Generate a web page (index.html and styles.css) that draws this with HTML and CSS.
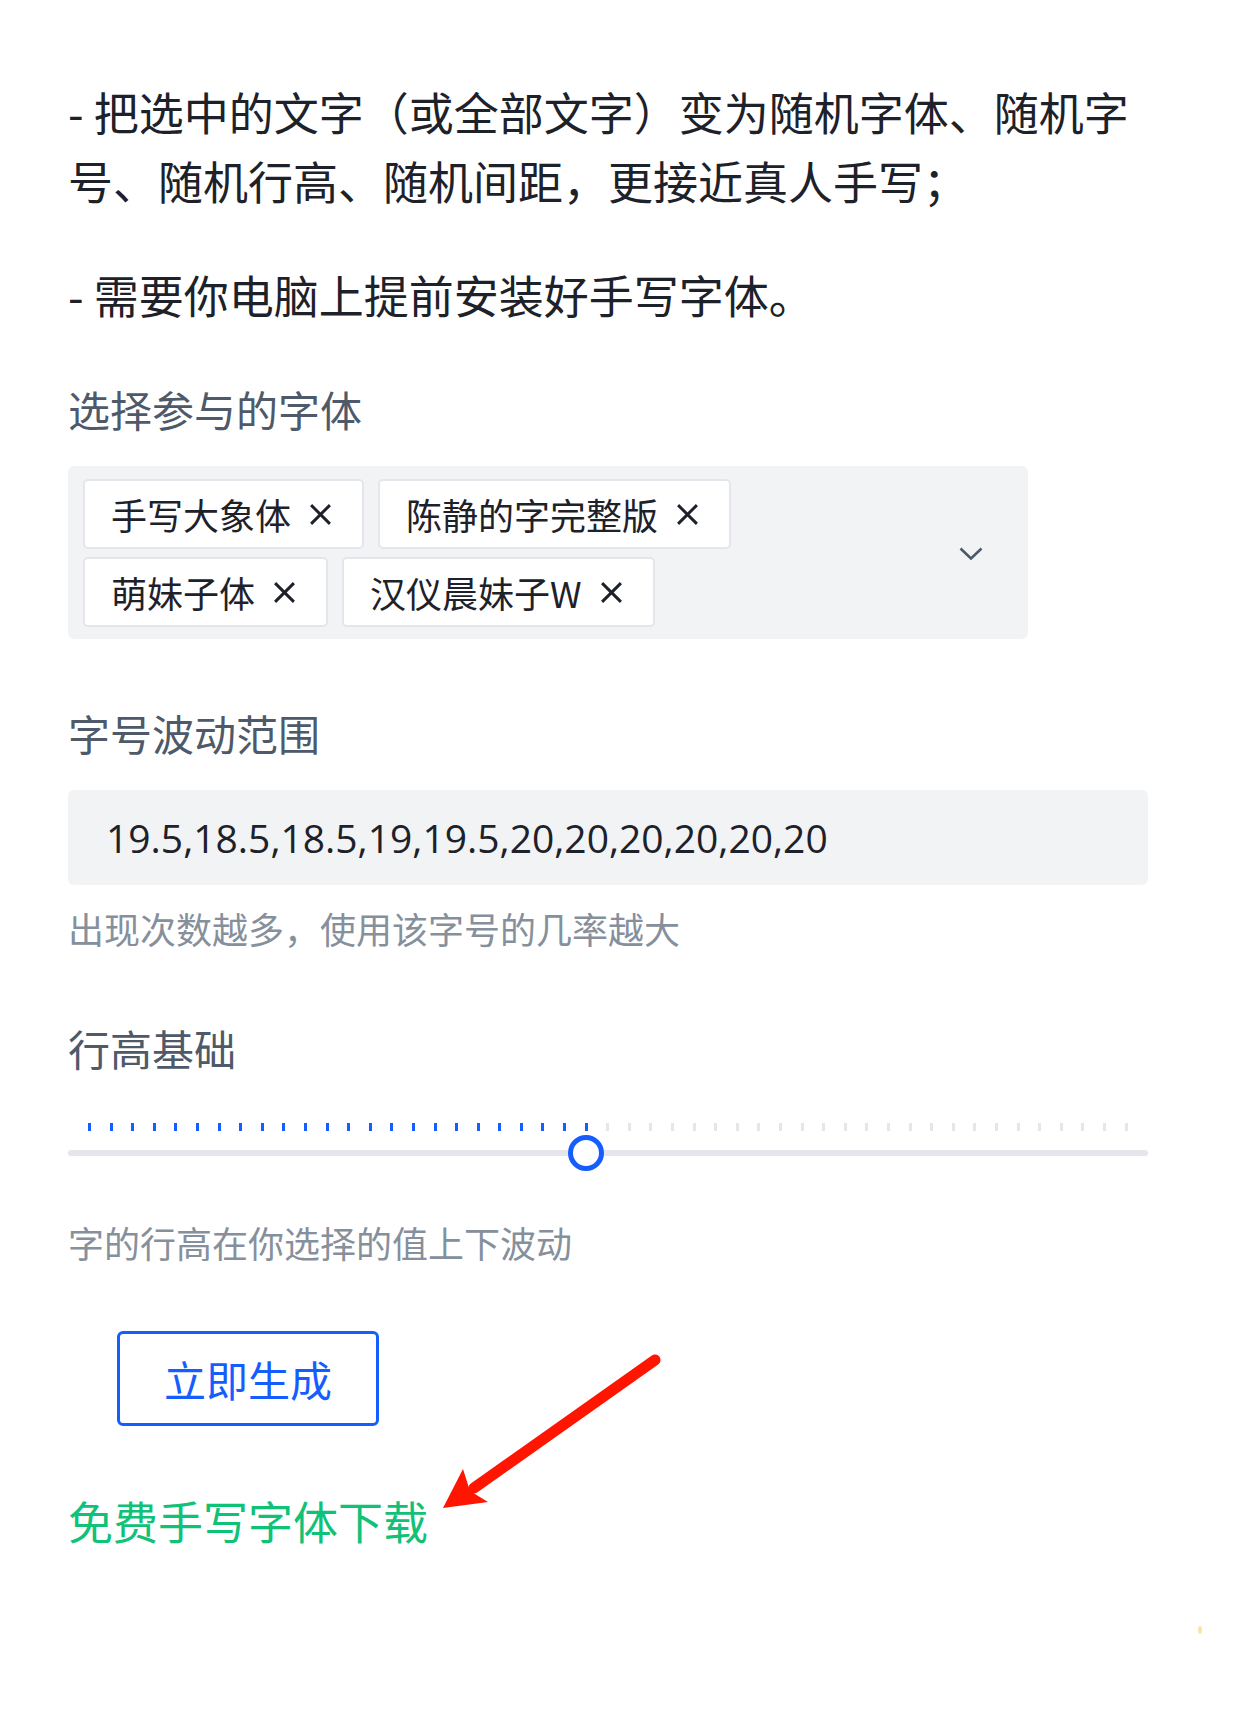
FILE: index.html
```html
<!DOCTYPE html>
<html lang="zh-CN">
<head>
    <meta charset="UTF-8">
    <meta name="viewport" content="width=device-width, initial-scale=1.0">
    <title>随机手写字体</title>
    <link rel="stylesheet" href="styles.css">
</head>
<body>
    <!-- 说明 -->
    <p class="desc">- 把选中的文字（或全部文字）变为随机字体、随机字号、随机行高、随机间距，更接近真人手写；</p>
    <p class="desc">- 需要你电脑上提前安装好手写字体。</p>

    <!-- 字体选择 -->
    <div class="label label-first">选择参与的字体</div>
    <div class="select">
        <div class="tags">
            <span class="tag">手写大象体<svg class="tag-close" viewBox="0 0 22 22"><path d="M2 2L20 20M20 2L2 20"/></svg></span>
            <span class="tag">陈静的字完整版<svg class="tag-close" viewBox="0 0 22 22"><path d="M2 2L20 20M20 2L2 20"/></svg></span>
            <span class="tag">萌妹子体<svg class="tag-close" viewBox="0 0 22 22"><path d="M2 2L20 20M20 2L2 20"/></svg></span>
            <span class="tag">汉仪晨妹子W<svg class="tag-close" viewBox="0 0 22 22"><path d="M2 2L20 20M20 2L2 20"/></svg></span>
        </div>
        <div class="select-arrow">
            <svg viewBox="0 0 24 13"><polyline points="1.5,1.5 12,11.5 22.5,1.5"/></svg>
        </div>
    </div>

    <!-- 字号 -->
    <div class="label">字号波动范围</div>
    <input class="text-input" type="text" value="19.5,18.5,18.5,19,19.5,20,20,20,20,20,20">
    <div class="help">出现次数越多，使用该字号的几率越大</div>

    <!-- 行高 -->
    <div class="label">行高基础</div>
    <div class="slider">
        <div class="ticks">
            <i class="on"></i><i class="on"></i><i class="on"></i><i class="on"></i><i class="on"></i><i class="on"></i>
            <i class="on"></i><i class="on"></i><i class="on"></i><i class="on"></i><i class="on"></i><i class="on"></i>
            <i class="on"></i><i class="on"></i><i class="on"></i><i class="on"></i><i class="on"></i><i class="on"></i>
            <i class="on"></i><i class="on"></i><i class="on"></i><i class="on"></i><i class="on"></i><i class="on"></i>
            <i></i><i></i><i></i><i></i><i></i><i></i><i></i><i></i><i></i><i></i><i></i><i></i><i></i>
            <i></i><i></i><i></i><i></i><i></i><i></i><i></i><i></i><i></i><i></i><i></i><i></i>
        </div>
        <div class="track"></div>
        <div class="thumb"></div>
    </div>
    <div class="help help-slider">字的行高在你选择的值上下波动</div>

    <button class="btn">立即生成</button>

    <a class="download" href="#">免费手写字体下载</a>

    <!-- 标注箭头 -->
    <svg class="arrow" viewBox="0 0 240 180">
        <line x1="225" y1="15" x2="44" y2="143"/>
        <polygon points="13,163 33,124 40,146 58,157"/>
    </svg>
    <span class="dot"></span>
</body>
</html>
```

FILE: styles.css
```css
* {
    margin: 0;
    padding: 0;
    box-sizing: border-box;
}

body {
    position: relative;
    width: 1247px;
    min-height: 1718px;
    padding: 77px 99px 0 68px;
    background: #fff;
    color: #1d2129;
    font-family: "Noto Sans CJK SC", sans-serif;
}

/* 说明 */
.desc {
    font-size: 45px;
    line-height: 69px;
    margin-bottom: 45px;
}

.desc + .desc {
    margin-bottom: 0;
}

/* Labels */
.label {
    font-size: 42px;
    line-height: 60px;
    color: #4e5969;
    margin-top: 64px;
}

.label-first {
    margin-top: 50px;
}

.help {
    font-size: 36px;
    line-height: 52px;
    color: #86909c;
    margin-top: 17px;
}

/* Select */
.select {
    display: flex;
    align-items: center;
    margin-top: 27px;
    padding: 13px 15px 12px 15px;
    background: #f2f3f5;
    border-radius: 6px;
    width: 960px;
}

.tags {
    flex: 1;
    display: flex;
    flex-wrap: wrap;
    gap: 8px 14px;
}

.tag {
    display: inline-flex;
    align-items: center;
    height: 70px;
    padding: 0 30px 0 26px;
    background: #fff;
    border: 2px solid #e5e6eb;
    border-radius: 5px;
    font-size: 36px;
    color: #1d2129;
}

.tag-close {
    width: 23px;
    height: 23px;
    margin-left: 18px;
    fill: none;
    stroke: #1d2129;
    stroke-width: 2.8;
}

.select-arrow {
    width: 84px;
    display: flex;
    justify-content: center;
}

.select-arrow svg {
    width: 24px;
    height: 13px;
    fill: none;
    stroke: #4e5969;
    stroke-width: 2.6;
}

/* Input */
.text-input {
    display: block;
    width: 100%;
    height: 95px;
    margin-top: 27px;
    padding: 0 38px;
    border: none;
    border-radius: 6px;
    background: #f2f3f5;
    color: #1d2129;
    font-family: "Open Sans", "Noto Sans CJK SC", sans-serif;
    font-size: 39px;
    outline: none;
}

/* Slider */
.slider {
    position: relative;
    margin-top: 31px;
    padding: 14px 0 33px;
}

.ticks {
    display: flex;
    justify-content: space-between;
    padding: 0 20px 0 20px;
}

.ticks i {
    width: 3px;
    height: 8px;
    background: #e5e6eb;
}

.ticks i.on {
    background: #165dff;
}

.track {
    height: 6px;
    margin-top: 19px;
    border-radius: 3px;
    background: #e5e6eb;
}

.thumb {
    position: absolute;
    left: 500px;
    top: 26px;
    width: 36px;
    height: 36px;
    border: 5px solid #165dff;
    border-radius: 50%;
    background: #fff;
}

.help-slider {
    margin-top: 27px;
}

/* Button */
.btn {
    display: block;
    width: 262px;
    height: 95px;
    margin: 63px 0 0 49px;
    border: 3px solid #165dff;
    border-radius: 6px;
    background: #fff;
    color: #165dff;
    font-family: "Noto Sans CJK SC", sans-serif;
    font-size: 42px;
    cursor: pointer;
}

.download {
    display: block;
    margin-top: 63px;
    font-size: 45px;
    line-height: 64px;
    color: #10c178;
    text-decoration: none;
}

/* 标注 */
.arrow {
    position: absolute;
    left: 430px;
    top: 1345px;
    width: 240px;
    height: 180px;
}

.arrow line {
    stroke: #ff1500;
    stroke-width: 11;
    stroke-linecap: round;
}

.arrow polygon {
    fill: #ff1500;
}

.dot {
    position: absolute;
    left: 1198px;
    top: 1626px;
    width: 4px;
    height: 8px;
    border-radius: 50%;
    background: #f8e6a8;
}
```
